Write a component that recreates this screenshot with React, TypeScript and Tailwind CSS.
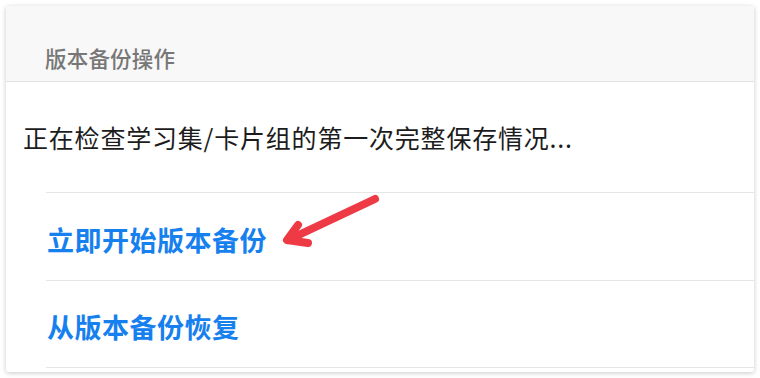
const cjk = { fontFamily: '"Noto Sans CJK SC", "Noto Sans", sans-serif' };

function ActionRow({ label, last }: { label: string; last?: boolean }) {
  return (
    <div
      className={`ml-[40px] flex h-[88px] items-center border-t border-[#e6e6e6] ${
        last ? "border-b" : ""
      }`}
    >
      <span className="pl-[1px] pt-[5px] text-[27px] font-bold leading-none tracking-[0.5px] text-[#1580ee]">
        {label}
      </span>
    </div>
  );
}

export default function App() {
  return (
    <div className="relative h-[378px] w-[760px] overflow-hidden bg-white" style={cjk}>
      <div className="ml-[6px] mt-[6px] h-[366px] w-[748px] overflow-hidden rounded-[3px] bg-white shadow-[0_1px_5px_rgba(0,0,0,0.22)]">
        {/* Header */}
        <div className="flex h-[76px] items-start border-b border-[#e3e3e3] bg-[#f8f8f8] pl-[39px] pt-[41px]">
          <span className="text-[21.5px] font-medium leading-none tracking-[0.2px] text-[#777777]">
            版本备份操作
          </span>
        </div>

        {/* Status */}
        <div className="flex h-[110px] items-center pl-[17px]">
          <span className="text-[25px] leading-none tracking-[0.8px] text-[#1c1c1c]">
            正在检查学习集/卡片组的第一次完整保存情况...
          </span>
        </div>

        <ActionRow label="立即开始版本备份" />
        <ActionRow label="从版本备份恢复" last />
      </div>

      {/* Annotation arrow */}
      <svg
        className="pointer-events-none absolute left-0 top-0"
        width="760"
        height="378"
        viewBox="0 0 760 378"
      >
        <g stroke="#ee3a45" strokeWidth="8" strokeLinecap="round" strokeLinejoin="round" fill="none">
          <path d="M375 199 L288 240" />
          <path d="M298 225 L287 240 L308 243" />
        </g>
      </svg>
    </div>
  );
}
